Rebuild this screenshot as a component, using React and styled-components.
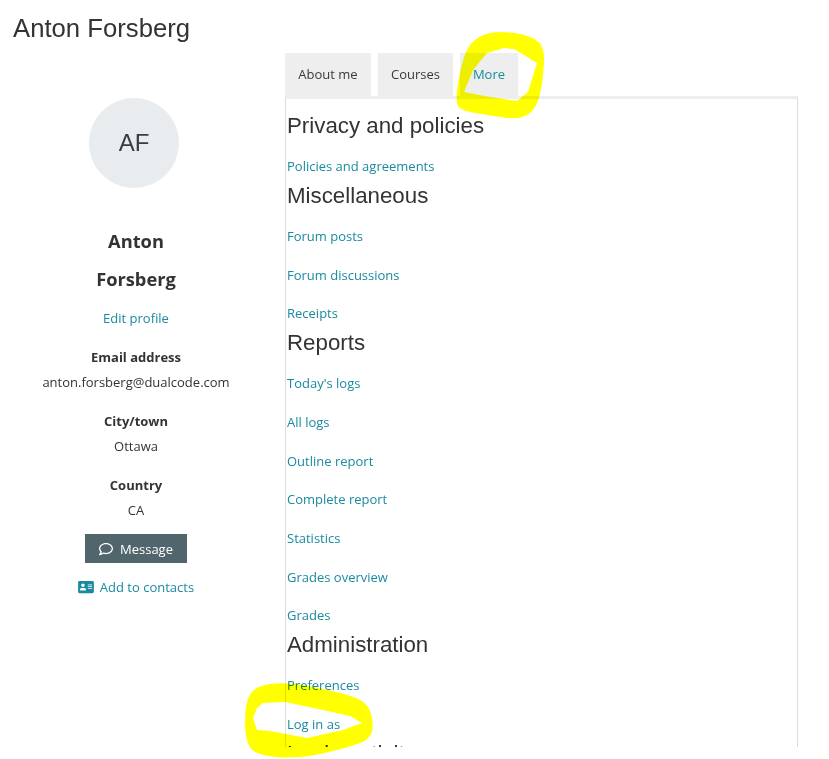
import React from "react";
import styled, { createGlobalStyle } from "styled-components";
import { FaRegComment, FaAddressCard } from "react-icons/fa";

const Global = createGlobalStyle`
  html, body { margin: 0; padding: 0; background: #fff; }
  body { font-family: "Open Sans", sans-serif; font-size: 13px; color: #373a3c; }
  a { color: #1a8a9f; text-decoration: none; }
`;

const Page = styled.div`
  position: relative;
  width: 829px;
  height: 759px;
  overflow: hidden;
`;
const Clip = styled.div`
  height: 747px;
  overflow: hidden;
  padding-top: 13px;
  box-sizing: border-box;
`;
const Title = styled.h1`
  margin: 0 0 0 13px;
  height: 30px;
  font: 400 25.7px/30px "Liberation Sans", sans-serif;
  color: #333;
`;
const Columns = styled.div`
  display: grid;
  grid-template-columns: 272px 513px;
  column-gap: 13px;
  margin-top: 10px;
`;
const Sidebar = styled.aside`
  display: flex;
  flex-direction: column;
  align-items: center;
  padding-top: 45px;
`;
const Avatar = styled.div`
  width: 90px;
  height: 90px;
  border-radius: 50%;
  background: #e9ecef;
  display: flex;
  align-items: center;
  justify-content: center;
  font: 400 24px "Liberation Sans", sans-serif;
  color: #3a3d40;
  margin-left: -4px;
`;
const Name = styled.div`
  font-size: 18.3px;
  font-weight: 700;
  line-height: 24px;
  color: #333;
  margin-top: ${(p) => p.$top}px;
`;
const SideLink = styled.a`
  display: block;
  line-height: 20px;
  margin-top: 17px;
`;
const Label = styled.div`
  font-weight: 700;
  line-height: 20px;
  color: #333;
  margin-top: ${(p) => p.$top}px;
`;
const Value = styled.div`
  line-height: 20px;
  color: #333;
  margin-top: 5px;
`;
const MessageButton = styled.button`
  margin-top: 14px;
  width: 102px;
  height: 29px;
  border: 0;
  padding: 0;
  background: #51666c;
  color: #fff;
  font: 400 13px "Open Sans", sans-serif;
  display: flex;
  align-items: center;
  justify-content: center;
  gap: 7px;
  svg { width: 14px; height: 14px; }
`;
const ContactLink = styled.a`
  display: flex;
  align-items: center;
  gap: 6px;
  line-height: 20px;
  margin-top: 14px;
  svg { width: 16px; height: 14px; }
`;
const Main = styled.main``;
const Tabs = styled.nav`
  display: flex;
  gap: 7px;
  height: 43px;
`;
const Tab = styled.a`
  display: flex;
  align-items: center;
  justify-content: center;
  padding-bottom: 2px;
  box-sizing: border-box;
  width: ${(p) => p.$w}px;
  background: #eee;
  color: ${(p) => (p.$active ? "#1a8a9f" : "#373a3c")};
`;
const Panel = styled.section`
  box-sizing: border-box;
  width: 513px;
  border-top: 3px solid #eee;
  border-left: 1px solid #ddd;
  border-right: 1px solid #ddd;
  padding: 13px 0 0 1px;
`;
const Heading = styled.h3`
  margin: 0 0 16px;
  font: 400 22.3px/28px "Liberation Sans", sans-serif;
  color: #333;
`;
const LinkList = styled.ul`
  list-style: none;
  margin: 0 0 6px;
  padding: 0;
  display: flex;
  flex-direction: column;
  gap: 18.67px;
  li { line-height: 20px; }
`;
const Scribble = styled.svg`
  position: absolute;
  inset: 0;
  width: 829px;
  height: 759px;
  mix-blend-mode: multiply;
  pointer-events: none;
`;

const sections = [
  ["Privacy and policies", ["Policies and agreements"]],
  ["Miscellaneous", ["Forum posts", "Forum discussions", "Receipts"]],
  ["Reports", ["Today's logs", "All logs", "Outline report", "Complete report", "Statistics", "Grades overview", "Grades"]],
  ["Administration", ["Preferences", "Log in as"]],
  ["Login activity", []],
];

const smooth = (pts) => {
  const mid = (a, b) => [(a[0] + b[0]) / 2, (a[1] + b[1]) / 2];
  const start = mid(pts[pts.length - 1], pts[0]);
  let d = `M${start[0]} ${start[1]}`;
  pts.forEach((p, i) => {
    const m = mid(p, pts[(i + 1) % pts.length]);
    d += `Q${p[0]} ${p[1]} ${m[0]} ${m[1]}`;
  });
  return d + "Z";
};
const sharp = (pts) => "M" + pts.map((p) => p.join(" ")).join("L") + "Z";

const moreOuter = [[483,34],[503,31],[532,36],[545,48],[543,80],[537,108],[520,120],[487,115],[458,110],[456,97],[460,70],[468,45]];
const moreInner = [[487,53],[504,48],[514,49],[537,63],[528,92],[517,101],[490,97],[464,92],[473,70]];
const logOuter = [[245,703],[255,686],[285,682],[330,690],[365,700],[373,717],[372,739],[343,749],[297,759],[255,755],[245,740]];
const logInner = [[253,718],[257,708],[263,703],[285,702],[323,710],[350,716],[362,723],[343,730],[307,738],[270,731],[257,730]];

export default function App() {
  return (
    <Page>
      <Global />
      <Clip>
        <Title>Anton Forsberg</Title>
        <Columns>
          <Sidebar>
            <Avatar>AF</Avatar>
            <Name $top={41}>Anton</Name>
            <Name $top={14}>Forsberg</Name>
            <SideLink href="#">Edit profile</SideLink>
            <Label $top={19}>Email address</Label>
            <Value>anton.forsberg@dualcode.com</Value>
            <Label $top={19}>City/town</Label>
            <Value>Ottawa</Value>
            <Label $top={19}>Country</Label>
            <Value>CA</Value>
            <MessageButton><FaRegComment />Message</MessageButton>
            <ContactLink href="#"><FaAddressCard />Add to contacts</ContactLink>
          </Sidebar>
          <Main>
            <Tabs>
              <Tab href="#" $w={86}>About me</Tab>
              <Tab href="#" $w={75}>Courses</Tab>
              <Tab href="#" $w={58} $active>More</Tab>
            </Tabs>
            <Panel>
              {sections.map(([title, links]) => (
                <div key={title}>
                  <Heading>{title}</Heading>
                  {links.length > 0 && (
                    <LinkList>
                      {links.map((l) => (
                        <li key={l}><a href="#">{l}</a></li>
                      ))}
                    </LinkList>
                  )}
                </div>
              ))}
            </Panel>
          </Main>
        </Columns>
      </Clip>
      <Scribble viewBox="0 0 829 759">
        <path fill="#ffff00" fillRule="evenodd" d={smooth(moreOuter) + sharp(moreInner)} />
        <path fill="#ffff00" fillRule="evenodd" d={smooth(logOuter) + sharp(logInner)} />
      </Scribble>
    </Page>
  );
}
